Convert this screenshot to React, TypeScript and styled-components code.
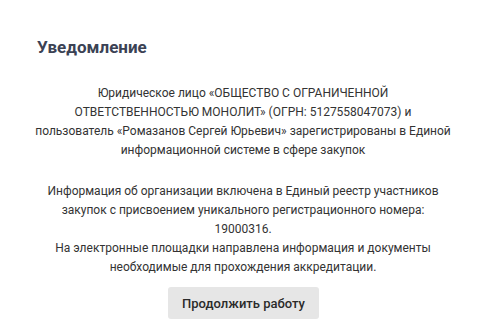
import styled, { createGlobalStyle } from "styled-components";

const GlobalStyle = createGlobalStyle`
  body {
    margin: 0;
    background: #ffffff;
    font-family: Roboto, "Liberation Sans", sans-serif;
  }
`;

const Modal = styled.div`
  width: 486px;
  box-sizing: border-box;
  padding: 37px 30px 0 30px;
  display: flex;
  flex-direction: column;
`;

const Title = styled.h2`
  margin: 0 0 0 7px;
  font-size: 17px;
  font-weight: 700;
  color: #3b4254;
  line-height: 20px;
`;

const Body = styled.div`
  margin-top: 27px;
  display: flex;
  flex-direction: column;
  gap: 22px;
`;

const Paragraph = styled.p`
  margin: 0;
  font-size: 12px;
  line-height: 19px;
  color: #333333;
  text-align: center;
  white-space: nowrap;
`;

const Actions = styled.div`
  display: flex;
  justify-content: center;
  margin-top: 10px;
  padding-left: 1px;
`;

const Button = styled.button`
  height: 32px;
  padding: 0 14px;
  border: none;
  border-radius: 3px;
  background: #e6e6e6;
  color: #2b2b2b;
  font-family: Roboto, "Liberation Sans", sans-serif;
  font-size: 13px;
  font-weight: 500;
  cursor: pointer;
`;

export default function App() {
  return (
    <>
      <GlobalStyle />
      <Modal>
        <Title>Уведомление</Title>
        <Body>
          <Paragraph>
            Юридическое лицо «ОБЩЕСТВО С ОГРАНИЧЕННОЙ
            <br />
            ОТВЕТСТВЕННОСТЬЮ МОНОЛИТ» (ОГРН: 5127558047073) и
            <br />
            пользователь «Ромазанов Сергей Юрьевич» зарегистрированы в Единой
            <br />
            информационной системе в сфере закупок
          </Paragraph>
          <Paragraph>
            Информация об организации включена в Единый реестр участников
            <br />
            закупок с присвоением уникального регистрационного номера:
            <br />
            19000316.
            <br />
            На электронные площадки направлена информация и документы
            <br />
            необходимые для прохождения аккредитации.
          </Paragraph>
        </Body>
        <Actions>
          <Button>Продолжить работу</Button>
        </Actions>
      </Modal>
    </>
  );
}
